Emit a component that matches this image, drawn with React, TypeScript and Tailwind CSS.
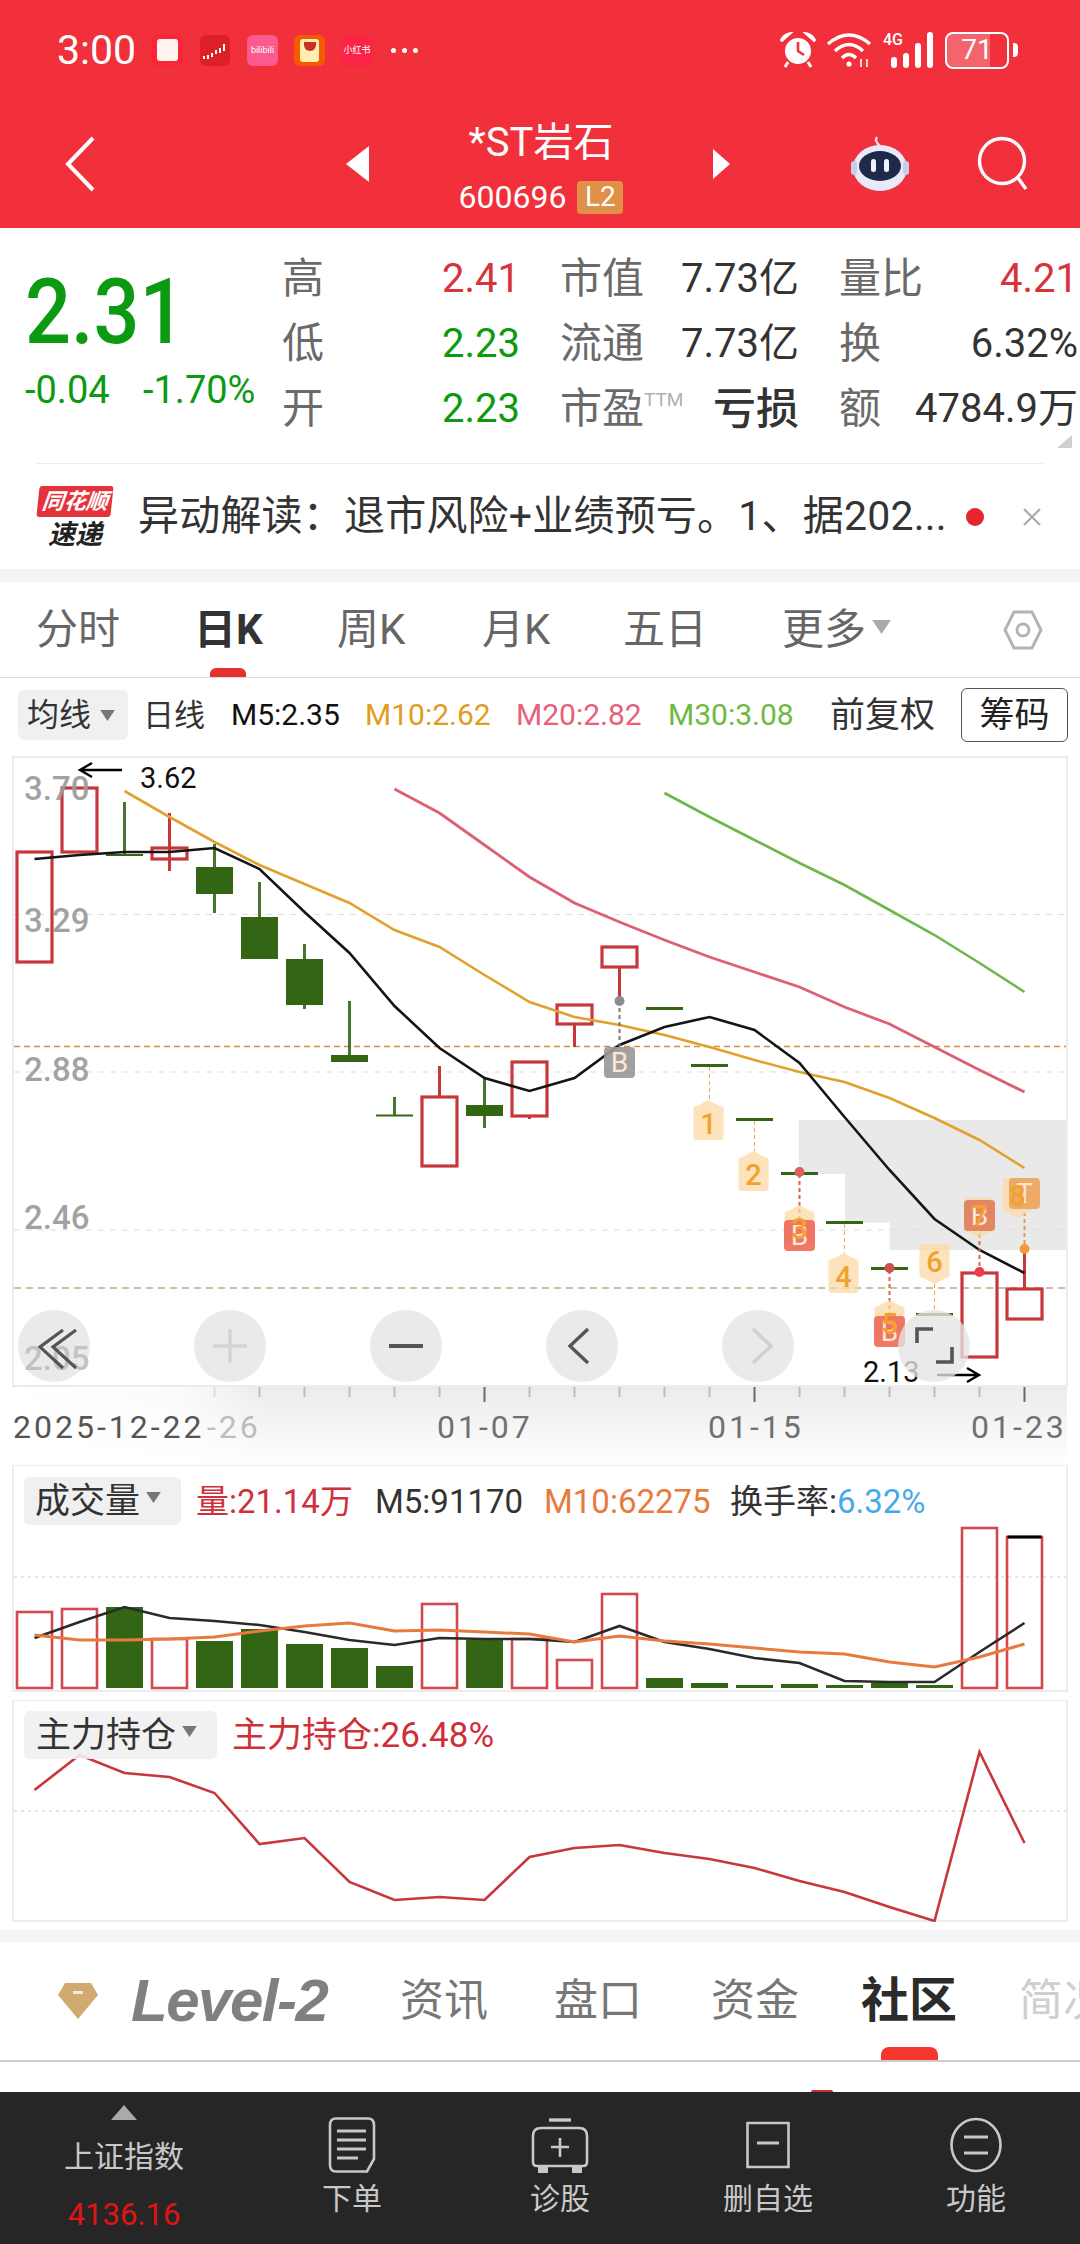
import React from "react";

const X = (i: number) => 34.5 + 45 * i;
const RED = "#c8373c";
const GREEN = "#336614";
const WICK = "#46762e";

type Candle = [string, number, number, number?, number?];

const candles: Candle[] = [
  ["r", 852, 962],
  ["r", 788, 852],
  ["g", 854, 856, 802, 855],
  ["r", 848, 859, 813, 871],
  ["g", 867, 894, 844, 913],
  ["g", 917, 959, 882, 917],
  ["g", 959, 1005, 944, 1009],
  ["g", 1055, 1062, 1001, 1055],
  ["g", 1114.5, 1116.5, 1097, 1115],
  ["r", 1097, 1166, 1066, 1097],
  ["g", 1105, 1116, 1078, 1128],
  ["r", 1062, 1116, 1116, 1119],
  ["r", 1005, 1024, 1024, 1047],
  ["r", 947, 967, 967, 1001],
  ["g", 1007, 1010],
  ["g", 1064, 1067],
  ["g", 1118, 1121],
  ["g", 1172, 1175],
  ["g", 1221, 1224],
  ["g", 1267, 1270],
  ["g", 1313, 1316],
  ["r", 1273, 1357],
  ["r", 1289, 1319, 1250, 1289],
];

const m5 = [859, 855, 852, 852, 848, 869, 912, 953, 1006, 1048, 1078, 1091, 1078, 1045, 1027, 1017, 1030, 1063, 1117, 1170, 1219, 1250, 1273];
const m10 = [791, 817, 842, 865, 884, 903, 930, 947, 975, 1002, 1017, 1025, 1035, 1047, 1060, 1072, 1082, 1098, 1118, 1140, 1168];
const m20 = [789, 813, 845, 877, 903, 922, 940, 957, 972, 987, 1007, 1024, 1047, 1070, 1092];
const m30 = [793, 817, 840, 863, 885, 910, 935, 963, 992];

const volBars: [string, number][] = [
  ["r", 1612], ["r", 1609], ["g", 1607], ["r", 1639], ["g", 1641], ["g", 1629], ["g", 1644], ["g", 1648],
  ["g", 1666], ["r", 1604], ["g", 1640], ["r", 1639], ["r", 1660], ["r", 1594], ["g", 1678], ["g", 1683],
  ["g", 1685], ["g", 1684], ["g", 1685], ["g", 1683], ["g", 1685], ["r", 1528], ["r", 1537],
];
const volBlack = [1638, 1622, 1607, 1618, 1621, 1625, 1632, 1640, 1645, 1638, 1639, 1639, 1642, 1626, 1642, 1649, 1658, 1663, 1681, 1682, 1682, 1652, 1623];
const volOrange = [1635, 1640, 1640, 1639, 1637, 1631, 1626, 1623, 1631, 1630, 1632, 1634, 1642, 1636, 1641, 1644, 1648, 1652, 1654, 1662, 1667, 1657, 1644];
const holdLine = [1790, 1755, 1773, 1777, 1793, 1844, 1838, 1882, 1900, 1897, 1900, 1857, 1848, 1845, 1853, 1859, 1868, 1881, 1892, 1907, 1921, 1752, 1843];

const pts = (ys: number[], from = 0) => ys.map((y, i) => `${X(i + from)},${y}`).join(" ");

// pale numbered flag, the letter flag (if any) sits between its shape and its digit
function NumTag({ x, top, n, down, children }: { x: number; top: number; n: string; down?: boolean; children?: React.ReactNode }) {
  const l = x - 15;
  const r = x + 15;
  const b = top + 40;
  const d = down
    ? `M${l + 3} ${top}H${r - 3}Q${r} ${top} ${r} ${top + 3}V${b - 9}Q${r} ${b - 6} ${r - 4} ${b - 6}L${x} ${b}L${l + 4} ${b - 6}Q${l} ${b - 6} ${l} ${b - 9}V${top + 3}Q${l} ${top} ${l + 3} ${top}Z`
    : `M${x} ${top}L${r - 4} ${top + 6}Q${r} ${top + 6} ${r} ${top + 9}V${b - 3}Q${r} ${b} ${r - 3} ${b}H${l + 3}Q${l} ${b} ${l} ${b - 3}V${top + 9}Q${l} ${top + 6} ${l + 4} ${top + 6}Z`;
  return (
    <g>
      <path d={d} fill="#fbd9a6" fillOpacity={0.75} />
      {children}
      <text x={x} y={down ? top + 28 : top + 34} fontSize={29} fill="#f2a22c" textAnchor="middle" fontWeight={500}>
        {n}
      </text>
    </g>
  );
}

function LetterTag({ x, top, letter, fill }: { x: number; top: number; letter: string; fill: string }) {
  return (
    <g>
      <rect x={x - 15.5} y={top} width={31} height={31} rx={4} fill={fill} fillOpacity={0.92} />
      <text x={x} y={top + 25} fontSize={28} fill="#fde6d2" textAnchor="middle">
        {letter}
      </text>
    </g>
  );
}

function Dashed({ x, y1, y2, color, w = 1 }: { x: number; y1: number; y2: number; color: string; w?: number }) {
  return <line x1={x} x2={x} y1={y1} y2={y2} stroke={color} strokeWidth={w} strokeDasharray="4 3" />;
}

function CircleBtn({ cx, children }: { cx: number; children?: React.ReactNode }) {
  return (
    <g>
      <circle cx={cx} cy={1346} r={36} fill="#e4e4e4" fillOpacity={0.78} />
      {children}
    </g>
  );
}

function MainChart() {
  return (
    <svg className="block" width={1080} height={713} viewBox="0 752 1080 713">
      <defs>
        <linearGradient id="axisFade" x1="0" y1="0" x2="0" y2="1">
          <stop offset="0" stopColor="#ebebeb" />
          <stop offset="1" stopColor="#ffffff" />
        </linearGradient>
        <linearGradient id="leftFade" x1="0" y1="0" x2="1" y2="0">
          <stop offset="0" stopColor="#ffffff" />
          <stop offset="0.65" stopColor="#ffffff" stopOpacity={0.8} />
          <stop offset="1" stopColor="#ffffff" stopOpacity={0} />
        </linearGradient>
      </defs>

      <rect x={13} y={1386} width={1054} height={79} fill="url(#axisFade)" />
      <rect x={13} y={1386} width={250} height={79} fill="url(#leftFade)" />
      <rect x={13} y={757} width={1054} height={629} fill="#fff" stroke="#ececec" strokeWidth={2} />

      <path d="M799 1120H1066V1250H889.5V1222.5H845V1174H799Z" fill="#e9e9e9" />

      {[914.5, 1072, 1230].map((y) => (
        <line key={y} x1={14} x2={1066} y1={y} y2={y} stroke="#dedede" strokeWidth={1.2} strokeDasharray="6 6" />
      ))}
      <line x1={14} x2={1066} y1={1046.5} y2={1046.5} stroke="#dc8a3c" strokeWidth={1.6} strokeDasharray="6 4" />
      <line x1={14} x2={1066} y1={1288} y2={1288} stroke="#b9a987" strokeWidth={1.6} strokeDasharray="7 5" />

      {candles.map(([kind, top, bottom, wt, wb], i) => {
        const x = X(i);
        if (kind === "r") {
          return (
            <g key={i}>
              {wt !== undefined && wb !== undefined && <line x1={x} x2={x} y1={wt} y2={wb} stroke={RED} strokeWidth={3} />}
              <rect x={x - 17.5} y={top} width={35} height={bottom - top} fill="none" stroke={RED} strokeWidth={3.2} />
            </g>
          );
        }
        return (
          <g key={i}>
            {wt !== undefined && wb !== undefined && <line x1={x} x2={x} y1={wt} y2={wb} stroke={WICK} strokeWidth={3} />}
            <rect x={x - 18.5} y={top} width={37} height={bottom - top} fill={GREEN} />
          </g>
        );
      })}

      <g fill="#9c9c9c" fontSize={33} fontWeight={500} fillOpacity={0.95}>
        <text x={24} y={800}>3.70</text>
        <text x={24} y={932}>3.29</text>
        <text x={24} y={1081}>2.88</text>
        <text x={24} y={1229}>2.46</text>
      </g>

      <polyline points={pts(m30, 14)} fill="none" stroke="#6cb84a" strokeWidth={2.6} />
      <polyline points={pts(m20, 8)} fill="none" stroke="#dd5f74" strokeWidth={2.8} />
      <polyline points={pts(m10, 2)} fill="none" stroke="#e2a12c" strokeWidth={2.6} />
      <polyline points={pts(m5)} fill="none" stroke="#151515" strokeWidth={2.6} />

      <Dashed x={X(13)} y1={1001} y2={1047} color="#777777" w={2} />
      <circle cx={X(13)} cy={1001} r={5} fill="#8c8c8c" />
      <LetterTag x={X(13)} top={1047} letter="B" fill="#999999" />

      <Dashed x={X(15)} y1={1067} y2={1102} color="#eaa94c" />
      <NumTag x={X(15) - 1} top={1100} n="1" />
      <Dashed x={X(16)} y1={1121} y2={1151} color="#eaa94c" />
      <NumTag x={X(16) - 1} top={1151} n="2" />

      <Dashed x={X(17)} y1={1174} y2={1220} color="#d9654f" w={2} />
      <circle cx={X(17)} cy={1172} r={5} fill="#d9625e" />
      <NumTag x={X(17)} top={1205} n="3">
        <LetterTag x={X(17)} top={1220} letter="B" fill="#ef6c5c" />
      </NumTag>

      <Dashed x={X(18)} y1={1224} y2={1253} color="#eaa94c" />
      <NumTag x={X(18) - 1} top={1253} n="4" />

      <Dashed x={X(19)} y1={1270} y2={1316} color="#d9654f" w={2} />
      <circle cx={X(19)} cy={1268} r={5} fill="#c9534f" />
      <NumTag x={X(19)} top={1300} n="5">
        <LetterTag x={X(19)} top={1316} letter="B" fill="#ef6c5c" />
      </NumTag>

      <NumTag x={X(20)} top={1244} n="6" down />
      <Dashed x={X(20)} y1={1284} y2={1314} color="#eaa94c" />

      <Dashed x={X(21)} y1={1234} y2={1272} color="#d9654f" w={2} />
      <circle cx={X(21)} cy={1272} r={5} fill="#e8404a" />
      <NumTag x={X(21)} top={1198} n="7" down>
        <LetterTag x={X(21)} top={1200} letter="B" fill="#df7f5c" />
      </NumTag>

      <Dashed x={X(22)} y1={1212} y2={1250} color="#e59a47" w={2} />
      <circle cx={X(22)} cy={1249} r={5} fill="#f09a40" />
      <NumTag x={X(22) - 7} top={1178} n="8" down>
        <LetterTag x={X(22)} top={1178} letter="T" fill="#eba560" />
      </NumTag>

      <path d="M122 770H80M92 763L80 770L92 777" fill="none" stroke="#000" strokeWidth={2.4} />
      <text x={140} y={788} fontSize={29} fill="#111">3.62</text>
      <text x={863} y={1382} fontSize={29} fill="#111">2.13</text>
      <path d="M937 1375H979M967 1368L979 1375L967 1382" fill="none" stroke="#000" strokeWidth={2.4} />

      <CircleBtn cx={54}>
        <text x={24} y={1370} fontSize={33} fontWeight={500} fill="#c2c2c2">2.05</text>
        <path d="M63 1330L40 1347L63 1368M76 1330L53 1347L76 1368" fill="none" stroke="#555555" strokeWidth={3.2} />
      </CircleBtn>
      <CircleBtn cx={230}>
        <path d="M213 1346H247M230 1329V1363" fill="none" stroke="#d4d4d4" strokeWidth={3.4} />
      </CircleBtn>
      <CircleBtn cx={406}>
        <path d="M389 1346H423" fill="none" stroke="#555555" strokeWidth={4} />
      </CircleBtn>
      <CircleBtn cx={582}>
        <path d="M588 1329L570 1346L588 1363" fill="none" stroke="#555555" strokeWidth={3.4} />
      </CircleBtn>
      <CircleBtn cx={758}>
        <path d="M753 1329L771 1346L753 1363" fill="none" stroke="#cfcfcf" strokeWidth={3.4} />
      </CircleBtn>
      <CircleBtn cx={934}>
        <path d="M917 1343V1329H933M952 1347V1362H936" fill="none" stroke="#555555" strokeWidth={3.6} />
      </CircleBtn>

      {Array.from({ length: 19 }, (_, k) => k + 4).map((i) => {
        const major = i === 10 || i === 16 || i === 22;
        return (
          <line
            key={i}
            x1={X(i)}
            x2={X(i)}
            y1={1387}
            y2={major ? 1402 : 1397}
            stroke={major ? "#6a6a6a" : i === 4 ? "#dcdcdc" : "#bdbdbd"}
            strokeWidth={2}
          />
        );
      })}

      <g fontSize={32} letterSpacing={3} fill="#707070">
        <text x={13} y={1438} fill="#555555">2025-12-22</text>
        <text x={207} y={1438} fill="#bdbdbd">-26</text>
        <text x={437} y={1438}>01-07</text>
        <text x={708} y={1438}>01-15</text>
        <text x={971} y={1438}>01-23</text>
      </g>
    </svg>
  );
}

function Caret({ className }: { className: string }) {
  return (
    <svg className={className} viewBox="0 0 16 12">
      <path d="M0 0H16L8 12Z" fill="currentColor" />
    </svg>
  );
}

function VolumePanel() {
  return (
    <div className="relative h-[235px]">
      <svg className="block" width={1080} height={235} viewBox="0 1465 1080 235">
        <rect x={13} y={1465} width={1054} height={226} fill="#fff" stroke="#ececec" strokeWidth={2} />
        <line x1={14} x2={1066} y1={1577} y2={1577} stroke="#dedede" strokeWidth={1.4} strokeDasharray="3 4" />
        {volBars.map(([kind, top], i) =>
          kind === "g" ? (
            <rect key={i} x={X(i) - 18.5} y={top} width={37} height={1688 - top} fill={GREEN} />
          ) : (
            <rect key={i} x={X(i) - 17.5} y={top} width={35} height={1688 - top} fill="none" stroke="#d24a50" strokeWidth={2.6} />
          )
        )}
        <line x1={X(22) - 17} x2={X(22) + 17} y1={1537} y2={1537} stroke="#000" strokeWidth={3} />
        <polyline points={pts(volBlack)} fill="none" stroke="#2a2a2a" strokeWidth={2.6} />
        <polyline points={pts(volOrange)} fill="none" stroke="#e97a3e" strokeWidth={3} />
      </svg>
      <div className="absolute left-[24px] top-[12px] flex items-center">
        <div className="flex h-[48px] w-[157px] items-center rounded-md bg-[#f0f0f0] pl-[11px] text-[35px] leading-none text-[#333]">
          成交量
          <Caret className="ml-[6px] mb-[8px] h-[11px] w-[15px] text-[#777]" />
        </div>
        <div className="ml-[15px] flex items-center text-[33px] leading-none">
          <span className="w-[179px] text-[#d0303a]">量:21.14万</span>
          <span className="w-[169px] text-[#333]">M5:91170</span>
          <span className="w-[186px] text-[#e97a3e]">M10:62275</span>
          <span className="text-[#333]">换手率:</span>
          <span className="text-[#45abe8]">6.32%</span>
        </div>
      </div>
    </div>
  );
}

function HoldingPanel() {
  return (
    <div className="relative h-[222px]">
      <svg className="block" width={1080} height={222} viewBox="0 1700 1080 222">
        <rect x={13} y={1700} width={1054} height={221} fill="#fff" stroke="#ececec" strokeWidth={2} />
        <line x1={14} x2={1066} y1={1811} y2={1811} stroke="#dedede" strokeWidth={1.4} strokeDasharray="3 4" />
        <polyline points={pts(holdLine)} fill="none" stroke="#c8373c" strokeWidth={2.6} />
      </svg>
      <div className="absolute left-[24px] top-[11px] flex items-center">
        <div className="flex h-[48px] w-[193px] items-center rounded-md bg-[#f0f0f0]/90 pl-[12px] text-[35px] leading-none text-[#333]">
          主力持仓
          <Caret className="ml-[6px] mb-[8px] h-[11px] w-[15px] text-[#777]" />
        </div>
        <span className="ml-[15px] text-[35px] leading-none text-[#cf3037]">主力持仓:26.48%</span>
      </div>
    </div>
  );
}

function StatusBar() {
  return (
    <div className="flex h-[100px] items-center text-white">
      <span className="ml-[57px] w-[94px] text-[41px] leading-none">3:00</span>
      <div className="flex h-[31px] w-[32px] items-center justify-center rounded-md bg-[#fb2535]">
        <div className="h-[22px] w-[21px] rounded-[3px] bg-[#fff4f0]" />
      </div>
      <div className="ml-[17px] h-[31px] w-[30px] rounded-md bg-[#dd2027]">
        <svg viewBox="0 0 30 31" className="h-full w-full">
          <path d="M4 21V24M8 20V24M12 18V22M16 15V19M20 13V18M24 9V16" stroke="#fff" strokeWidth={2} />
        </svg>
      </div>
      <div className="ml-[17px] flex h-[31px] w-[31px] items-center justify-center rounded-md bg-[#fb5a8e] text-[9px] leading-none text-white">
        bilibili
      </div>
      <div className="ml-[16px] flex h-[31px] w-[31px] items-center justify-center rounded-md bg-[#f65a00]">
        <div className="flex h-[23px] w-[19px] items-start justify-center rounded-[3px] bg-[#ffeeb0] pt-[3px]">
          <div className="h-[9px] w-[12px] rounded-b-full bg-[#c8321e]" />
        </div>
      </div>
      <div className="ml-[16px] flex h-[31px] w-[32px] items-center justify-center rounded-md bg-[#fb2447] text-[9px] leading-none text-white">
        小红书
      </div>
      <div className="ml-[18px] flex gap-[6px]">
        <div className="h-[5px] w-[5px] rounded-full bg-[#fff]" />
        <div className="h-[5px] w-[5px] rounded-full bg-[#fff]" />
        <div className="h-[5px] w-[5px] rounded-full bg-[#fff]" />
      </div>

      <svg className="ml-[361px] h-[36px] w-[38px]" viewBox="0 0 38 36" fill="none">
        <circle cx={19} cy={19} r={13} fill="#fff" />
        <path d="M19 10V19L25 23" stroke="#f1303c" strokeWidth={2.6} />
        <path d="M2 9Q5 3 10 2L2 9ZM36 9Q33 3 28 2L36 9Z" stroke="#fff" strokeWidth={3} />
        <path d="M9 30L6 35M29 30L32 35" stroke="#fff" strokeWidth={3} />
      </svg>
      <svg className="ml-[9px] h-[36px] w-[46px]" viewBox="0 0 46 36" fill="none" stroke="#fff" strokeWidth={3.4}>
        <path d="M2 12Q23 -6 44 12" />
        <path d="M9 19Q23 6 37 19" />
        <path d="M16 26Q23 19 30 26" />
        <circle cx={23} cy={32} r={2.6} fill="#fff" stroke="none" />
        <path d="M35 27V35M41 27V35" strokeWidth={1.6} />
      </svg>
      <div className="relative ml-[11px] flex h-[36px] w-[51px] items-end gap-[6px] pl-[8px]">
        <span className="absolute left-0 top-0 text-[16px] font-medium leading-none">4G</span>
        <div className="h-[11px] w-[6px] rounded-sm bg-white" />
        <div className="h-[15px] w-[6px] rounded-sm bg-white" />
        <div className="h-[25px] w-[6px] rounded-sm bg-white" />
        <div className="h-[36px] w-[6px] rounded-sm bg-white" />
      </div>
      <div className="relative ml-[11px] flex h-[37px] w-[64px] items-center justify-center overflow-hidden rounded-[8px] border-2 border-[#fff] text-[28px] leading-none">
        <div className="absolute inset-y-0 left-0 w-[71%] bg-[#fff] opacity-25" />
        <span className="relative">71</span>
      </div>
      <div className="ml-[4px] h-[14px] w-[5px] rounded-r bg-[#fff]" />
    </div>
  );
}

function NavBar() {
  return (
    <div className="flex h-[128px] items-center text-white">
      <svg className="ml-[65px] h-[56px] w-[30px]" viewBox="0 0 30 56" fill="none">
        <path d="M28 2L3 28L28 54" stroke="#fff" strokeWidth={4} />
      </svg>
      <svg className="ml-[251px] h-[36px] w-[23px]" viewBox="0 0 23 36">
        <path d="M23 0V36L0 18Z" fill="#fff" />
      </svg>
      <div className="flex w-[344px] flex-col items-center pt-[6px]">
        <div className="text-[40px] leading-[44px]">*ST岩石</div>
        <div className="mt-[16px] flex h-[33px] items-center">
          <span className="text-[32px] leading-none">600696</span>
          <span className="ml-[11px] flex h-[33px] w-[46px] items-center justify-center rounded-sm bg-[#e09048] text-[28px] leading-none">L2</span>
        </div>
      </div>
      <svg className="h-[30px] w-[17px]" viewBox="0 0 17 30">
        <path d="M0 0V30L17 15Z" fill="#fff" />
      </svg>
      <svg className="ml-[120px] h-[56px] w-[60px]" viewBox="0 0 60 56">
        <path d="M30 10Q24 5 27 1" fill="none" stroke="#f6d9dd" strokeWidth={2.4} />
        <ellipse cx={30} cy={32} rx={27} ry={23} fill="#e8e9fa" />
        <rect x={1} y={25} width={6} height={14} rx={3} fill="#c9cdf0" />
        <rect x={53} y={25} width={6} height={14} rx={3} fill="#c9cdf0" />
        <ellipse cx={30} cy={30} rx={21} ry={15} fill="#1e2a4a" />
        <rect x={21} y={23} width={5} height={13} rx={2.5} fill="#f1f2ff" />
        <rect x={34} y={23} width={5} height={13} rx={2.5} fill="#f1f2ff" />
      </svg>
      <svg className="ml-[66px] h-[56px] w-[54px]" viewBox="0 0 54 56" fill="none">
        <circle cx={26} cy={25} r={22.5} stroke="#fff" strokeWidth={3.4} />
        <path d="M42 42L50 53" stroke="#fff" strokeWidth={3.4} />
      </svg>
    </div>
  );
}

function QuoteCell({ label, value, color, bold }: { label: React.ReactNode; value: string; color: string; bold?: boolean }) {
  return (
    <div className="flex items-center justify-between">
      <span className="text-[42px] leading-none text-[#6a6a6a]">{label}</span>
      <span className={`leading-none ${color} ${bold ? "text-[43px] font-medium" : "text-[40px]"}`}>{value}</span>
    </div>
  );
}

function Quote() {
  return (
    <section className="relative h-[341px] pt-[18px]">
      <div className="flex h-[196px]">
        <div className="w-[282px] pl-[25px] pt-[23px] text-[#0c9a12]">
          <div className="origin-left scale-x-[0.9] text-[90px] font-medium leading-[88px]">2.31</div>
          <div className="mt-[15px] flex h-[36px] items-center text-[38px] leading-none">
            <span className="w-[118px]">-0.04</span>
            <span>-1.70%</span>
          </div>
        </div>
        <div className="grid w-[796px] grid-cols-[238px_239px_239px] grid-rows-3 items-center gap-x-[40px]">
          <QuoteCell label="高" value="2.41" color="text-[#d6333a]" />
          <QuoteCell label="市值" value="7.73亿" color="text-[#333]" />
          <QuoteCell label="量比" value="4.21" color="text-[#d6333a]" />
          <QuoteCell label="低" value="2.23" color="text-[#0c9a12]" />
          <QuoteCell label="流通" value="7.73亿" color="text-[#333]" />
          <QuoteCell label="换" value="6.32%" color="text-[#333]" />
          <QuoteCell label="开" value="2.23" color="text-[#0c9a12]" />
          <QuoteCell
            label={
              <span className="flex items-start">
                市盈<span className="mt-[2px] text-[19px] leading-none text-[#b0b0b0]">TTM</span>
              </span>
            }
            value="亏损"
            color="text-[#333]"
            bold
          />
          <QuoteCell label="额" value="4784.9万" color="text-[#333]" />
        </div>
      </div>
      <svg className="absolute left-[1057px] top-[207px] h-[13px] w-[15px]" viewBox="0 0 15 13">
        <path d="M15 0V13H0Z" fill="#cfcfcf" />
      </svg>
      <div className="ml-[36px] mt-[21px] h-px w-[1007px] bg-[#ededed]" />
      <div className="flex h-[105px] items-center">
        <div className="ml-[38px] flex w-[74px] flex-col items-center pt-[2px]">
          <div className="flex h-[31px] w-[74px] -skew-x-6 items-center justify-center rounded-[3px] bg-[#e5333b] text-[22px] font-bold italic leading-none text-white">
            同花顺
          </div>
          <div className="mt-[4px] text-[27px] font-bold italic leading-[28px] text-[#222]">速递</div>
        </div>
        <div className="ml-[26px] w-[812px] whitespace-nowrap text-[41px] leading-none tracking-[0.2px] text-[#333]">异动解读：退市风险+业绩预亏。1、据202...</div>
        <div className="ml-[16px] h-[18px] w-[18px] rounded-full bg-[#e6262e]" />
        <svg className="ml-[39px] h-[18px] w-[18px]" viewBox="0 0 18 18" fill="none">
          <path d="M1 1L17 17M17 1L1 17" stroke="#aaaaaa" strokeWidth={2.2} />
        </svg>
      </div>
    </section>
  );
}

function PeriodTabs() {
  return (
    <nav className="relative flex h-[96px] items-center border-b border-[#dedede] text-[42px] leading-none text-[#666]">
      <span className="ml-[36px] w-[158px]">分时</span>
      <span className="w-[143px] font-bold text-[#333]">日K</span>
      <span className="w-[145px]">周K</span>
      <span className="w-[141px]">月K</span>
      <span className="w-[159px]">五日</span>
      <span>更多</span>
      <Caret className="ml-[6px] mb-[6px] h-[14px] w-[19px] text-[#aaa]" />
      <svg className="ml-[112px] h-[40px] w-[40px]" viewBox="0 0 40 40" fill="none" stroke="#b4b4b4" strokeWidth={3}>
        <path d="M11 2H29L38 20L29 38H11L2 20Z" />
        <circle cx={20} cy={20} r={6} />
      </svg>
      <div className="absolute bottom-0 left-[210px] h-[9px] w-[36px] rounded-t-md bg-[#e53030]" />
    </nav>
  );
}

function IndicatorRow() {
  return (
    <div className="flex h-[74px] items-center text-[30px] leading-none">
      <div className="ml-[18px] flex h-[50px] w-[110px] items-center rounded-md bg-[#f0f0f0] pl-[9px] text-[32px] text-[#333]">
        均线
        <Caret className="ml-[9px] h-[11px] w-[15px] text-[#777]" />
      </div>
      <span className="ml-[15px] w-[88px] text-[31px] text-[#333]">日线</span>
      <span className="w-[134px] text-[#111]">M5:2.35</span>
      <span className="w-[151px] text-[#e29c1c]">M10:2.62</span>
      <span className="w-[152px] text-[#e8607a]">M20:2.82</span>
      <span className="w-[162px] text-[#6cbb3f]">M30:3.08</span>
      <span className="w-[131px] text-[35px] text-[#333]">前复权</span>
      <div className="flex h-[54px] w-[107px] items-center justify-center rounded-md border border-[#555] text-[35px] text-[#222]">筹码</div>
    </div>
  );
}

function DetailTabs() {
  return (
    <nav className="relative flex h-[120px] items-center overflow-hidden border-b-2 border-[#cccccc] text-[44px] leading-none text-[#777]">
      <svg className="ml-[58px] h-[36px] w-[40px] shrink-0" viewBox="0 0 40 36">
        <path d="M7 0H33L40 12L20 36L0 12Z" fill="#d1aa70" />
        <rect x={15} y={8} width={10} height={3} fill="#f6ead4" />
      </svg>
      <span className="ml-[33px] w-[269px] shrink-0 font-['Liberation_Sans',sans-serif] text-[60px] font-bold italic tracking-tight text-[#808080]">Level-2</span>
      <span className="w-[154px] shrink-0">资讯</span>
      <span className="w-[157px] shrink-0">盘口</span>
      <span className="w-[150px] shrink-0">资金</span>
      <span className="w-[158px] shrink-0 text-[48px] font-bold text-[#2b2b2b]">社区</span>
      <span className="shrink-0 whitespace-nowrap text-[#cfcfcf]">简况</span>
      <div className="absolute bottom-0 left-[881px] h-[13px] w-[57px] rounded-t-lg bg-[#f5362f]" />
    </nav>
  );
}

function BottomBar() {
  return (
    <footer className="relative flex h-[152px] bg-[#262626] text-[#c8c8c8]">
      <div className="absolute left-[811px] top-[-2px] h-[2px] w-[22px] rounded-t-full bg-[#c83030]" />
      <div className="flex w-[248px] flex-col items-center pt-[13px]">
        <svg className="h-[15px] w-[26px]" viewBox="0 0 26 15">
          <path d="M13 0L26 15H0Z" fill="#aaaaaa" />
        </svg>
        <div className="mt-[19px] text-[30px] leading-[36px]">上证指数</div>
        <div className="mt-[24px] text-[31px] leading-[32px] text-[#e01414]">4136.16</div>
      </div>
      <div className="flex w-[208px] flex-col items-center pt-[25px]">
        <svg className="h-[56px] w-[48px]" viewBox="0 0 48 56" fill="none" stroke="#c8c8c8" strokeWidth={2.6}>
          <path d="M8 1.5H40Q46 1.5 46 8V42L39 54.5H8Q2 54.5 2 48V8Q2 1.5 8 1.5Z" />
          <path d="M9 14H38M9 23H38M9 32H38M9 41H30" strokeWidth={3} />
        </svg>
        <div className="mt-[8px] text-[30px] leading-[36px]">下单</div>
      </div>
      <div className="flex w-[208px] flex-col items-center pt-[25px]">
        <svg className="h-[56px] w-[58px]" viewBox="0 0 58 56" fill="none" stroke="#c8c8c8" strokeWidth={2.6}>
          <path d="M18 3H40" strokeWidth={3.4} />
          <path d="M10 11H48Q56 11 56 19V45Q56 49 52 49H6Q2 49 2 45V19Q2 11 10 11Z" />
          <path d="M8 50V55H16V50M42 50V55H50V50" strokeWidth={2} fill="#c8c8c8" />
          <path d="M29 21V40M20 30H38" strokeWidth={2.6} />
        </svg>
        <div className="mt-[8px] text-[30px] leading-[36px]">诊股</div>
      </div>
      <div className="flex w-[208px] flex-col items-center pt-[25px]">
        <svg className="h-[56px] w-[46px]" viewBox="0 0 46 56" fill="none" stroke="#c8c8c8" strokeWidth={2.6}>
          <path d="M2.5 6H43.5V50H2.5Z" />
          <path d="M12 26H34" strokeWidth={3} />
        </svg>
        <div className="mt-[8px] text-[30px] leading-[36px]">删自选</div>
      </div>
      <div className="flex w-[208px] flex-col items-center pt-[25px]">
        <svg className="h-[56px] w-[54px]" viewBox="0 0 54 56" fill="none" stroke="#c8c8c8" strokeWidth={2.6}>
          <ellipse cx={27} cy={28} rx={24.5} ry={26} />
          <path d="M15 20H39M15 36H39" strokeWidth={3} />
        </svg>
        <div className="mt-[8px] text-[30px] leading-[36px]">功能</div>
      </div>
    </footer>
  );
}

export default function App() {
  return (
    <div className="relative h-[2244px] w-[1080px] overflow-hidden bg-white font-['Roboto','Noto_Sans_CJK_SC',sans-serif]">
      <header className="h-[228px] bg-[#f1303c]">
        <StatusBar />
        <NavBar />
      </header>
      <Quote />
      <div className="h-[13px] bg-[#f4f4f4]" />
      <PeriodTabs />
      <IndicatorRow />
      <MainChart />
      <VolumePanel />
      <HoldingPanel />
      <div className="mt-[8px] h-[12px] bg-[#f4f4f4]" />
      <DetailTabs />
      <div className="h-[30px] bg-white" />
      <BottomBar />
    </div>
  );
}
